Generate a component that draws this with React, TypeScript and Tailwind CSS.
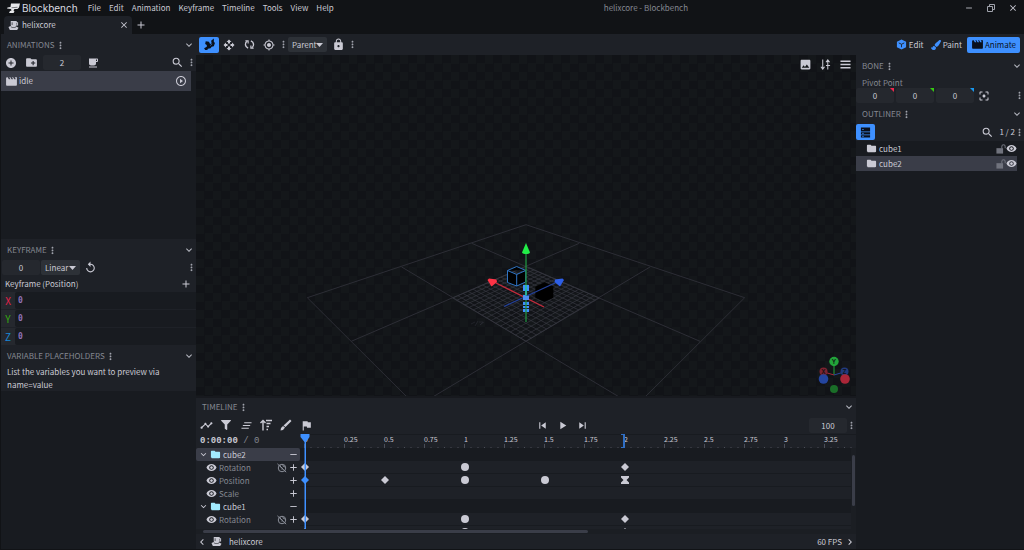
import { useState } from "react";
import type { ReactNode } from "react";
import {
  MdAdd,
  MdAddCircle,
  MdClose,
  MdCreateNewFolder,
  MdFilterCenterFocus,
  MdFlag,
  MdFolder,
  MdGpsFixed,
  MdKeyboardArrowDown,
  MdKeyboardArrowLeft,
  MdKeyboardArrowRight,
  MdLocalCafe,
  MdLock,
  MdMoreVert,
  MdMovie,
  MdOpenWith,
  MdPhoto,
  MdPlayArrow,
  MdPlayCircleOutline,
  MdRemove,
  MdReplay,
  MdSearch,
  MdSkipNext,
  MdSkipPrevious,
  MdTimeline,
  MdVisibility,
} from "react-icons/md";
import { FaFilter, FaPaintBrush } from "react-icons/fa";

const MENUS = ["File", "Edit", "Animation", "Keyframe", "Timeline", "Tools", "View", "Help"];

const PX_PER_SECOND = 160;
const ORIGIN = 5;

type Shape = "diamond" | "circle" | "hourglass";

type Keyframe = { time: number; shape: Shape; selected?: boolean };

type Track = {
  name?: string;
  group?: boolean;
  selected?: boolean;
  global?: boolean;
  keys: Keyframe[];
};

const ROTATION_KEYS: Keyframe[] = [
  { time: 0, shape: "diamond" },
  { time: 1, shape: "circle" },
  { time: 2, shape: "diamond" },
];

const TRACKS: Track[] = [
  { name: "cube2", group: true, selected: true, keys: [] },
  { name: "Rotation", global: true, keys: ROTATION_KEYS },
  {
    name: "Position",
    keys: [
      { time: 0, shape: "diamond", selected: true },
      { time: 0.5, shape: "diamond" },
      { time: 1, shape: "circle" },
      { time: 1.5, shape: "circle" },
      { time: 2, shape: "hourglass" },
    ],
  },
  { name: "Scale", keys: [] },
  { name: "cube1", group: true, keys: [] },
  { name: "Rotation", global: true, keys: ROTATION_KEYS },
  { keys: ROTATION_KEYS },
];

function BlockbenchLogo() {
  return (
    <svg viewBox="0 0 26 20" className="h-[10px] w-[13px]" fill="#e6e7ea">
      <path d="M8 1h18l-2 8-3 3h-6l-2 3 2 2-2 3H4l2-4 3-1-1-3-8-1 1-2 6-1z" />
      <path d="M9 9.500l12-1" stroke="#111316" strokeWidth="1" />
    </svg>
  );
}

function ProjectIcon() {
  return (
    <svg viewBox="0 0 24 24" className="size-[11px]" fill="#cacad4">
      <path d="M6 2h13v3h3v7h-4l-2 4H8l-2-4z" />
      <path d="M1 15l5-2 2 4h8l2-3 5 3-3 5H4z" />
      <path d="M9 5v6M19 7v3" stroke="#1e2127" strokeWidth="1.5" />
    </svg>
  );
}

function CubeIcon() {
  return (
    <svg viewBox="0 0 24 24" className="size-[11px]">
      <path d="M12 1l10 5v12l-10 5-10-5V6z" fill="#3e90ff" />
      <path d="M6 8.500l6 3 6-3M12 11.500V18" fill="none" stroke="#1e2127" strokeWidth="2" />
    </svg>
  );
}

function PivotToolIcon() {
  return (
    <svg viewBox="0 0 24 24" className="size-[13px]" fill="#0a101c">
      <path d="M5 6l6 1 2 4 3-1-1-5 5-4v6l2 2-2 6-4 1-2 3-5 1-1 2H4l-2-3 5-3v-3l-3-2z" />
      <path d="M13 14l4-3" stroke="#3e90ff" strokeWidth="1" />
    </svg>
  );
}

function RotateToolIcon() {
  return (
    <svg viewBox="0 0 24 24" className="size-[11px]" fill="none" stroke="#cacad4" strokeWidth="3">
      <path d="M9 20C2 17 1 9 7 5M15 4c7 3 8 11 2 15" />
      <path d="M3 4h6v6M21 20h-6v-6" strokeWidth="2.500" />
    </svg>
  );
}

function SwapIcon() {
  return (
    <svg viewBox="0 0 24 24" className="size-[11px]" fill="none" stroke="#cacad4" strokeWidth="2.200">
      <path d="M6 1v20M2 17l4 5 4-5M17 23V3M13 7l4-5 4 5M13 14h9" />
    </svg>
  );
}

function MenuIcon() {
  return (
    <svg viewBox="0 0 24 24" className="size-[11px]" stroke="#cacad4" strokeWidth="3">
      <path d="M1 5h22M1 12h22M1 19h22" />
    </svg>
  );
}

function OutlinerToggleIcon() {
  return (
    <svg viewBox="0 0 24 24" className="size-[11px]" fill="#0a101c">
      <path d="M2 1h20v9H2zM2 11.500h20v5H2zM2 18h20v5H2z" />
      <path d="M5 5.500h3M5 14h3M5 20.500h3" stroke="#3e90ff" strokeWidth="2" />
    </svg>
  );
}

function ClearIcon() {
  return (
    <svg viewBox="0 0 24 24" className="size-[11px]" stroke="#cacad4" strokeWidth="2.600">
      <path d="M7 6h16M4 12h16M1 18h16" />
    </svg>
  );
}

function SortIcon() {
  return (
    <svg viewBox="0 0 24 24" className="size-3" fill="none" stroke="#cacad4" strokeWidth="2.800">
      <path d="M6 23V3M1 8l5-5 5 5M12 3h12M13 9h8M13 15h5M13 21h3" />
    </svg>
  );
}

function BrushIcon() {
  return (
    <svg viewBox="0 0 24 24" className="size-3" fill="#cacad4">
      <path d="M20 1l3 3L11 16l-4-3zM6 14l4 3-4 5-5 1 1-5z" />
    </svg>
  );
}

function UnlockedIcon() {
  return (
    <svg viewBox="0 0 24 24" className="size-[10px]" fill="#70737d">
      <path d="M1 10h16v13H1z" />
      <path d="M14 11V6a4 4 0 0 1 8 0v4" fill="none" stroke="#70737d" strokeWidth="2.500" />
    </svg>
  );
}

function GlobalOffIcon() {
  return (
    <svg viewBox="0 0 24 24" className="size-[10px]" fill="none" stroke="#8a8e98" strokeWidth="2.400">
      <circle cx="12" cy="12" r="9" />
      <path d="M7 5l2 5 4 2-1 4M14 4l1 4 5 2M1 2l21 20" />
    </svg>
  );
}

function IconButton({ label, children }: { label: string; children: ReactNode }) {
  return (
    <button
      type="button"
      aria-label={label}
      className="flex h-4 w-5 shrink-0 items-center justify-center text-[#cacad4] hover:text-white"
    >
      {children}
    </button>
  );
}

function MoreDots() {
  return <MdMoreVert className="-mx-px size-[11px] shrink-0 text-[#a0a3ac]" />;
}

function PanelHeader({ title }: { title: string }) {
  return (
    <div className="flex h-[18px] items-center pl-[6px] pr-px text-[#848891]">
      <h2 className="mr-px">{title}</h2>
      <MoreDots />
      <button type="button" aria-label={`Fold ${title}`} className="ml-auto">
        <MdKeyboardArrowDown className="size-3 text-[#b4b6bf]" />
      </button>
    </div>
  );
}

function Dropdown({ label, value }: { label: string; value: string }) {
  return (
    <div className="relative h-[15px] w-[39px] shrink-0">
      <select
        aria-label={label}
        className="block h-full w-full appearance-none rounded-xs bg-[#2d3137] pl-1 outline-none"
      >
        <option>{value}</option>
      </select>
      <svg viewBox="0 0 7 4" className="pointer-events-none absolute right-1 top-[6px] h-1 w-[7px]" fill="#cacad4">
        <path d="M0 0H7L3.500 4Z" />
      </svg>
    </div>
  );
}

function NumberBox({ label, value }: { label: string; value: string }) {
  return (
    <input
      aria-label={label}
      defaultValue={value}
      className="block h-[15px] w-[38px] shrink-0 rounded-xs bg-[#25282e] text-center outline-none"
    />
  );
}

function TitleBar() {
  return (
    <header className="flex h-4 shrink-0 items-center pb-px pl-[7px]">
      <BlockbenchLogo />
      <span className="ml-[2px] font-['Inter'] text-[10px] text-[#d9dbe0]">Blockbench</span>
      <nav className="ml-[10px] flex gap-2">
        {MENUS.map((menu) => (
          <button key={menu} type="button">
            {menu}
          </button>
        ))}
      </nav>
      <p className="flex-1 text-center text-[#848891]">helixcore - Blockbench</p>
      <div className="flex">
        <button type="button" aria-label="Minimize" className="flex w-[22px] justify-center">
          <MdRemove className="size-[10px]" />
        </button>
        <button type="button" aria-label="Restore" className="flex w-[22px] justify-center">
          <svg viewBox="0 0 10 10" className="size-[10px]" fill="none" stroke="#a0a3ac">
            <path d="M1.500 3.500h5v5h-5zM3.500 3V1.500h5v5H7" />
          </svg>
        </button>
        <button type="button" aria-label="Close window" className="flex w-[22px] justify-center">
          <MdClose className="size-[10px]" />
        </button>
      </div>
    </header>
  );
}

function TabBar() {
  return (
    <div className="flex h-[18px] shrink-0 items-center pl-1">
      <div className="flex h-full w-[128px] items-center rounded-t bg-[#1e2127] pl-1 pr-[3px]">
        <ProjectIcon />
        <span className="ml-[3px]">helixcore</span>
        <button type="button" aria-label="Close tab" className="ml-auto">
          <MdClose className="size-[10px]" />
        </button>
      </div>
      <button type="button" aria-label="New tab" className="ml-[3px]">
        <MdAdd className="size-3" />
      </button>
    </div>
  );
}

function AnimationsPanel() {
  return (
    <section className="pt-[2px]">
      <PanelHeader title="ANIMATIONS" />
      <div className="flex h-[17px] items-center">
        <IconButton label="Add animation">
          <MdAddCircle className="size-3" />
        </IconButton>
        <IconButton label="Add folder">
          <MdCreateNewFolder className="size-[13px]" />
        </IconButton>
        <div className="mx-[2px]">
          <NumberBox label="Animation length" value="2" />
        </div>
        <IconButton label="Optimize animation">
          <MdLocalCafe className="size-3" />
        </IconButton>
        <div className="ml-auto flex items-center">
          <IconButton label="Search animations">
            <MdSearch className="size-[13px]" />
          </IconButton>
          <MoreDots />
        </div>
      </div>
      <ul className="h-[168px] bg-[#181b20] pr-[5px]">
        <li className="flex h-5 items-center bg-[#3a3d48] pl-1 pr-1">
          <MdMovie className="size-[13px]" />
          <span className="ml-px">idle</span>
          <button type="button" aria-label="Play idle" className="ml-auto">
            <MdPlayCircleOutline className="size-3" />
          </button>
        </li>
      </ul>
    </section>
  );
}

function KeyframePanel() {
  const [values, setValues] = useState({ X: "0", Y: "0", Z: "0" });
  const axes = [
    { axis: "X" as const, color: "text-[#e3224b]" },
    { axis: "Y" as const, color: "text-[#35a911]" },
    { axis: "Z" as const, color: "text-[#1788d8]" },
  ];

  return (
    <section className="pt-[2px]">
      <PanelHeader title="KEYFRAME" />
      <div className="flex h-[17px] items-center pl-px">
        <NumberBox label="Keyframe time" value="0" />
        <div className="ml-px">
          <Dropdown label="Interpolation" value="Linear" />
        </div>
        <IconButton label="Reset keyframe">
          <MdReplay className="size-[13px]" />
        </IconButton>
        <div className="ml-auto">
          <MoreDots />
        </div>
      </div>
      <div className="flex h-4 items-center pl-1 pr-1">
        <span>Keyframe (Position)</span>
        <button type="button" aria-label="Add data point" className="ml-auto">
          <MdAdd className="size-3" />
        </button>
      </div>
      <div className="flex flex-col gap-px">
        {axes.map(({ axis, color }) => (
          <label key={axis} className="flex h-[17px] items-center bg-[#25282e]">
            <span className={`w-[14px] text-center text-[10px] ${color}`}>{axis}</span>
            <input
              value={values[axis]}
              onChange={(event) => setValues({ ...values, [axis]: event.target.value })}
              className="h-full min-w-0 flex-1 rounded-l-xs bg-[#181b20] pl-[3px] font-['DejaVu_Sans_Mono'] font-bold text-[#8f72b8] outline-none"
            />
          </label>
        ))}
      </div>
    </section>
  );
}

function LeftSidebar() {
  return (
    <aside className="flex w-[196px] shrink-0 flex-col border-l border-[#111316] bg-[#1e2127]">
      <AnimationsPanel />
      <KeyframePanel />
      <section className="pt-[2px]">
        <PanelHeader title="VARIABLE PLACEHOLDERS" />
        <p className="pl-[6px] pr-8 leading-[13px]">List the variables you want to preview via name=value</p>
      </section>
      <textarea aria-label="Variable placeholders" className="flex-1 resize-none bg-[#181b20] outline-none" />
    </aside>
  );
}

function Toolbar() {
  return (
    <div className="flex h-[21px] shrink-0 items-center bg-[#1e2127] pl-[3px] pr-1">
      <button
        type="button"
        aria-label="Pivot tool"
        className="flex h-4 w-5 items-center justify-center rounded-xs bg-[#3e90ff]"
      >
        <PivotToolIcon />
      </button>
      <IconButton label="Move">
        <MdOpenWith className="size-3" />
      </IconButton>
      <IconButton label="Rotate">
        <RotateToolIcon />
      </IconButton>
      <IconButton label="Resize">
        <MdGpsFixed className="size-3" />
      </IconButton>
      <MoreDots />
      <Dropdown label="Transform space" value="Parent" />
      <div className="ml-px flex items-center">
        <IconButton label="Lock motion trail">
          <MdLock className="size-[13px]" />
        </IconButton>
        <MoreDots />
      </div>
      <div className="ml-auto flex items-center gap-[3px]">
        <button type="button" className="flex items-center gap-[2px] px-[2px]">
          <CubeIcon />
          Edit
        </button>
        <button type="button" className="flex items-center gap-[2px] px-[2px]">
          <FaPaintBrush className="size-[10px] text-[#3e90ff]" />
          Paint
        </button>
        <button type="button" className="flex h-4 items-center gap-px rounded-xs bg-[#3e90ff] px-1 text-[#0a101c]">
          <MdMovie className="size-[13px]" />
          Animate
        </button>
      </div>
    </div>
  );
}

// floor quad corners: back, right, front, left
const FLOOR = { back: [526, 267.3], right: [599.3, 299], front: [526, 342.3], left: [452.7, 299] };

function project(u: number, v: number) {
  const [x0, y0] = FLOOR.back;
  const [x1, y1] = FLOOR.right;
  const [x2, y2] = FLOOR.front;
  const [x3, y3] = FLOOR.left;
  const sx = x0 - x1 + x2 - x3;
  const sy = y0 - y1 + y2 - y3;
  const det = (x1 - x2) * (y3 - y2) - (x3 - x2) * (y1 - y2);
  const g = (sx * (y3 - y2) - (x3 - x2) * sy) / det;
  const h = ((x1 - x2) * sy - sx * (y1 - y2)) / det;
  const w = g * u + h * v + 1;
  const x = ((x1 - x0 + g * x1) * u + (x3 - x0 + h * x3) * v + x0) / w;
  const y = ((y1 - y0 + g * y1) * u + (y3 - y0 + h * y3) * v + y0) / w;
  return `${x} ${y}`;
}

const GRID_PATH = Array.from({ length: 17 }, (_, i) => {
  const t = i / 16;
  return `M${project(t, 0)}L${project(t, 1)}M${project(0, t)}L${project(1, t)}`;
}).join("");

function Scene() {
  return (
    <svg
      viewBox="196 56 660 342"
      preserveAspectRatio="xMidYMax slice"
      className="h-full w-full"
      fill="none"
      role="img"
      aria-label="Model preview"
    >
      <g transform="translate(0 1)">
        <g stroke="#2c2d35">
          <path d="M417 408L307.300 298.700L526 225.700L744.700 298.700L635 408" />
          <path d="M471.700 244.300L700 342.300M401.700 268L636 408M579.300 244.300L351.300 342.300M650 268L416 408" />
          <path d={GRID_PATH} strokeWidth="0.7" stroke="#373841" />
          <path d="M471 325l4-2M475 327l3-5M479 323h4l-3 3 4-3" strokeWidth="0.6" />
        </g>
        <path
          d="M535.300 287.700L544.700 283.300L553.300 287.300V298.700L544.300 302.700L535.300 298.700Z"
          fill="#000"
        />
        <path
          d="M507.500 271.500L516.700 267.500L525.700 271.500V283L516.700 287L507.500 283.500ZM507.500 271.500L516.700 275.500L525.700 271.500M516.700 275.500V287"
          fill="#000"
          stroke="#2f74c4"
        />
        <path d="M523 286h6v6h-6zM523 296h6v5h-6zM523 303h6v3h-6zM523 307h6v2h-6zM523 310h6v3h-6z" fill="#3e90ff" />
        <path d="M526 254V323" stroke="#1f9140" strokeWidth="1.300" />
        <path d="M526 286V298" stroke="#2fc4b0" strokeWidth="1.500" />
        <path d="M555 284L504 307.500" stroke="#23419b" strokeWidth="1.300" />
        <path d="M496 284L544 308" stroke="#c42a3a" strokeWidth="1.300" />
        <path d="M526 244L530 253.500C529 255.500 523 255.500 522 253.500Z" fill="#22ee48" />
        <path d="M487.500 281L489 279.500L496.500 280.500L497 283L491.500 287.500Z" fill="#ff3346" />
        <path d="M564 281L562.500 279.500L555 280.500L554.500 283L560 287.500Z" fill="#2d5fe8" />
        <path d="M523 297h6v4h-6z" fill="#4f8df0" />
      </g>
    </svg>
  );
}

function AxisGizmo() {
  return (
    <svg viewBox="816 354 36 41" className="absolute bottom-px right-1 h-[41px] w-9">
      <path d="M834 375V365" stroke="#23a23a" />
      <path d="M834 375L824 372" stroke="#a32a3a" />
      <path d="M834 375L844 372" stroke="#27479f" />
      <circle cx="823.500" cy="371.500" r="4" fill="#7c2330" />
      <circle cx="844.500" cy="371.500" r="4" fill="#223a7c" />
      <circle cx="834" cy="361.500" r="4.700" fill="#22a43a" />
      <circle cx="823.500" cy="379" r="4.800" fill="#24459f" />
      <circle cx="845" cy="379" r="4.800" fill="#ab2638" />
      <circle cx="834" cy="389" r="4" fill="#1a6e28" />
      <g fontFamily="Inter, sans-serif" fontSize="6" fontWeight="600" textAnchor="middle" fill="#101114">
        <text x="834" y="364">Y</text>
        <text x="823.500" y="374">X</text>
        <text x="844.500" y="374">Z</text>
      </g>
    </svg>
  );
}

function Viewport() {
  return (
    <main className="relative min-h-0 flex-1 overflow-hidden bg-[repeating-conic-gradient(#111317_0_25%,#14171a_0_50%)] bg-[length:17px_17px]">
      <Scene />
      <div className="absolute right-px top-px flex items-center">
        <IconButton label="Background">
          <MdPhoto className="size-[13px]" />
        </IconButton>
        <IconButton label="Sort views">
          <SwapIcon />
        </IconButton>
        <IconButton label="Viewport menu">
          <MenuIcon />
        </IconButton>
      </div>
      <AxisGizmo />
    </main>
  );
}

function BonePanel() {
  const axes = [
    { axis: "X", corner: "border-t-[#f0264f]" },
    { axis: "Y", corner: "border-t-[#35c911]" },
    { axis: "Z", corner: "border-t-[#1798f0]" },
  ];
  return (
    <section className="pt-[2px]">
      <PanelHeader title="BONE" />
      <p className="h-3 pl-[6px] leading-[16px] text-[#848891]">Pivot Point</p>
      <div className="flex h-[17px] items-center">
        <div className="flex gap-[2px]">
          {axes.map(({ axis, corner }) => (
            <div key={axis} className="relative">
              <NumberBox label={`Pivot ${axis}`} value="0" />
              <span className={`absolute right-0 top-0 border-l-4 border-t-4 border-l-transparent ${corner}`} />
            </div>
          ))}
        </div>
        <IconButton label="Center pivot">
          <MdFilterCenterFocus className="size-3" />
        </IconButton>
        <div className="ml-auto">
          <MoreDots />
        </div>
      </div>
    </section>
  );
}

function RightSidebar() {
  return (
    <aside className="flex w-[168px] shrink-0 flex-col bg-[#1e2127]">
      <BonePanel />
      <section className="flex flex-1 flex-col pt-px">
        <PanelHeader title="OUTLINER" />
        <div className="flex h-[18px] items-center">
          <button
            type="button"
            aria-label="Toggle outliner options"
            className="flex h-4 w-[19px] items-center justify-center rounded-xs bg-[#3e90ff]"
          >
            <OutlinerToggleIcon />
          </button>
          <div className="ml-auto flex items-center">
            <IconButton label="Search outliner">
              <MdSearch className="size-[13px]" />
            </IconButton>
            <span className="ml-[2px]">1 / 2</span>
            <MoreDots />
          </div>
        </div>
        <ul className="flex-1 bg-[#181b20] pr-[7px]">
          {["cube1", "cube2"].map((name) => (
            <li
              key={name}
              className={`flex h-[15px] items-center pl-[10px] ${name === "cube2" ? "bg-[#3a3d48]" : ""}`}
            >
              <MdFolder className="size-[11px]" />
              <span className="ml-[2px]">{name}</span>
              <button type="button" aria-label={`Lock ${name}`} className="ml-auto">
                <UnlockedIcon />
              </button>
              <button type="button" aria-label={`Hide ${name}`}>
                <MdVisibility className="size-[11px]" />
              </button>
            </li>
          ))}
        </ul>
      </section>
    </aside>
  );
}

function KeyframeMark({ shape, selected }: Keyframe) {
  return (
    <svg viewBox="0 0 10 10" className="size-[10px]" fill={selected ? "#3e90ff" : "#cacad4"}>
      {shape === "diamond" && <path d="M5 1L9 5L5 9L1 5Z" />}
      {shape === "circle" && <circle cx="5" cy="5" r="4" />}
      {shape === "hourglass" && <path d="M1 1H9V2.500L6.500 5L9 7.500V9H1V7.500L3.500 5L1 2.500Z" />}
    </svg>
  );
}

function TrackRow({ track }: { track: Track }) {
  return (
    <div className="flex h-[13px] shrink-0">
      <div
        className={`flex w-[104px] shrink-0 items-center pr-px ${track.selected ? "rounded-xs bg-[#3a3d48]" : ""} ${
          track.group ? "pl-[2px]" : "pl-[10px]"
        }`}
      >
        {track.group ? (
          <>
            <MdKeyboardArrowDown className="size-[11px]" />
            <MdFolder className="ml-px size-[11px] text-[#a2ebff]" />
            <span className="ml-[2px] leading-[13px]">{track.name}</span>
          </>
        ) : (
          <>
            <MdVisibility className="size-[11px]" />
            {track.name && <span className="ml-[2px] leading-[13px] text-[#848891]">{track.name}</span>}
          </>
        )}
        <div className="ml-auto flex items-center gap-px">
          {track.global && <GlobalOffIcon />}
          {track.group ? <MdRemove className="size-[11px]" /> : <MdAdd className="size-[11px]" />}
        </div>
      </div>
      <div
        className={`relative flex-1 border-b border-[#181b20] ${track.group ? "bg-[#181b20]" : "bg-[#1e2127]"}`}
      >
        {track.keys.map((key) => (
          <span
            key={key.time}
            className="absolute top-px -translate-x-1/2"
            style={{ left: ORIGIN + key.time * PX_PER_SECOND }}
          >
            <KeyframeMark {...key} />
          </span>
        ))}
      </div>
    </div>
  );
}

function Ruler() {
  return (
    <div className="flex h-[14px] flex-1 overflow-hidden border-t border-[#181b20] pl-1">
      {Array.from({ length: 14 }, (_, i) => (
        <div key={i} className="flex h-full w-10 shrink-0 flex-col justify-between">
          <span className="text-[7px] leading-[9px]">{i * 0.25}</span>
          <svg viewBox="0 0 40 5" className="h-[5px] w-10 shrink-0" stroke="#4a4d57">
            <path d="M0.500 0V5M7 3V5M14 3V5M20.500 3V5M27 3V5M34 3V5" />
          </svg>
        </div>
      ))}
    </div>
  );
}

function Timeline() {
  return (
    <section className="flex shrink-0 flex-col border-t-2 border-[#17191e] bg-[#1e2127]">
      <PanelHeader title="TIMELINE" />
      <div className="flex h-[18px] items-center">
        <IconButton label="Graph editor">
          <MdTimeline className="size-[13px]" />
        </IconButton>
        <IconButton label="Filter">
          <FaFilter className="size-[10px]" />
        </IconButton>
        <IconButton label="Clear timeline">
          <ClearIcon />
        </IconButton>
        <IconButton label="Sort">
          <SortIcon />
        </IconButton>
        <IconButton label="Brush">
          <BrushIcon />
        </IconButton>
        <IconButton label="Marker">
          <MdFlag className="size-[13px]" />
        </IconButton>
        <div className="flex flex-1 justify-center">
          <IconButton label="Jump to start">
            <MdSkipPrevious className="size-[13px]" />
          </IconButton>
          <IconButton label="Play">
            <MdPlayArrow className="size-[13px]" />
          </IconButton>
          <IconButton label="Jump to end">
            <MdSkipNext className="size-[13px]" />
          </IconButton>
        </div>
        <NumberBox label="Playback speed" value="100" />
        <MoreDots />
      </div>

      <div className="relative">
        <div className="flex h-[14px] items-center">
          <p className="w-[104px] shrink-0 pl-1 font-['Liberation_Mono'] text-[9px] leading-[14px]">
            <span className="font-bold">0:00:00</span>
            <span className="text-[#848891]"> / 0</span>
          </p>
          <Ruler />
        </div>
        <div className="flex h-[81px]">
          <div className="flex min-w-0 flex-1 flex-col overflow-hidden">
            {TRACKS.map((track, i) => (
              <TrackRow key={i} track={track} />
            ))}
          </div>
          <div className="w-[5px] bg-[#1b1e23] py-[7px]">
            <div className="ml-px h-[51px] w-[3px] rounded-full bg-[#3a3d48]" />
          </div>
        </div>
        {/* playhead and end marker */}
        <svg viewBox="0 0 10 95" className="absolute left-[104px] top-0 h-full w-[10px]" fill="#3e90ff">
          <path d="M0.500 0H9.500V3L6 8V95H4.500V8L0.500 3Z" />
        </svg>
        <span className="absolute left-[425px] top-0 h-[14px] w-1 border-y border-r-2 border-[#2f6ec4]" />
      </div>

      <div className="flex h-[5px] items-center bg-[#1b1e23] pl-[7px]">
        <div className="h-[3px] w-[385px] rounded-full bg-[#3a3d48]" />
      </div>
      <footer className="flex h-[15px] items-center">
        <MdKeyboardArrowLeft className="size-3" />
        <span className="ml-[3px]">
          <ProjectIcon />
        </span>
        <span className="ml-[7px]">helixcore</span>
        <span className="ml-auto">60 FPS</span>
        <MdKeyboardArrowRight className="ml-[2px] size-3" />
      </footer>
    </section>
  );
}

export default function App() {
  return (
    <div className="flex h-screen flex-col overflow-hidden bg-[#111316] font-['Noto_Sans_CJK_SC',sans-serif] text-[8px] leading-none text-[#cacad4]">
      <TitleBar />
      <TabBar />
      <div className="flex min-h-0 flex-1 pb-px">
        <LeftSidebar />
        <div className="flex min-w-0 flex-1 flex-col">
          <Toolbar />
          <div className="flex min-h-0 flex-1">
            <div className="flex min-w-0 flex-1 flex-col">
              <Viewport />
              <Timeline />
            </div>
            <RightSidebar />
          </div>
        </div>
      </div>
    </div>
  );
}
